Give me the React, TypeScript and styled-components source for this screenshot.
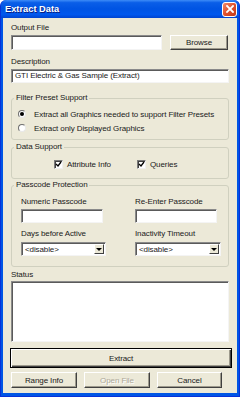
import React, { FC } from 'react'
import styled, { createGlobalStyle } from 'styled-components'

const GlobalStyle = createGlobalStyle`
	html, body {
		margin: 0;
		padding: 0;
		background: #ffffff;
	}
	body {
		font-family: 'Liberation Sans', Arial, sans-serif;
	}
`

const Window = styled.div`
	width: 240px;
	height: 397px;
	box-sizing: border-box;
	display: flex;
	flex-direction: column;
	background: #0055e5;
	border: 1px solid #0831d9;
	border-top: none;
	border-radius: 6px 6px 0 0;
	padding: 0 2px 3px;
`

const TitleBar = styled.div`
	height: 18px;
	margin: 0 -2px;
	display: flex;
	align-items: center;
	justify-content: space-between;
	padding: 0 2px 0 4px;
	border-radius: 6px 6px 0 0;
	background: linear-gradient(
		to bottom,
		#3d8cf7 0%,
		#0a5ee8 15%,
		#0054e3 50%,
		#0058ee 80%,
		#0044d0 100%
	);
`

const Title = styled.span`
	color: #ffffff;
	font-weight: bold;
	font-size: 9.3px;
	text-shadow: 1px 1px 0 #0a1e80;
`

const CloseButton = styled.div`
	width: 15px;
	height: 15px;
	box-sizing: border-box;
	border: 1px solid #ffffff;
	border-radius: 3px;
	background: linear-gradient(135deg, #f08a6a 0%, #e0502c 50%, #c23a1a 100%);
	display: flex;
	align-items: center;
	justify-content: center;
`

const Body = styled.div`
	flex: 1;
	display: flex;
	flex-direction: column;
	background: #ece9d8;
	padding: 0 8px 5px 8px;
	font-size: 8px;
	letter-spacing: -0.1px;
	color: #1a1a1a;
`

const Label = styled.div<{ top: number }>`
	height: 10px;
	line-height: 10px;
	margin-top: ${(p) => p.top}px;
	white-space: nowrap;
`

const Row = styled.div<{ top: number }>`
	display: flex;
	gap: 8px;
	margin-top: ${(p) => p.top}px;
`

const TextBox = styled.div<{ w?: number; h: number; top?: number }>`
	box-sizing: border-box;
	${(p) => (p.w ? `width: ${p.w}px;` : 'align-self: stretch;')}
	height: ${(p) => p.h}px;
	margin-top: ${(p) => p.top ?? 0}px;
	background: #ffffff;
	border: 1px solid;
	border-color: #8a8a8a #f4f4f4 #f4f4f4 #8a8a8a;
	box-shadow: inset 1px 1px 0 #5a5a5a;
	padding: 0 3px;
	line-height: 12px;
	white-space: nowrap;
	overflow: hidden;
`

const Button = styled.div<{ w?: number; h: number; disabled?: boolean }>`
	box-sizing: border-box;
	${(p) => (p.w ? `width: ${p.w}px;` : '')}
	height: ${(p) => p.h}px;
	display: flex;
	align-items: center;
	justify-content: center;
	background: #ece9d8;
	border: 1px solid;
	border-color: #ffffff #404040 #404040 #ffffff;
	box-shadow: inset -1px -1px 0 #9d9a8c;
	color: ${(p) => (p.disabled ? '#aca899' : '#1a1a1a')};
	text-shadow: ${(p) => (p.disabled ? '1px 1px 0 #ffffff' : 'none')};
	white-space: nowrap;
`

const DefaultButton = styled(Button)`
	margin: 6px -3px 0 -1px;
	border: 1px solid #000000;
	box-shadow: inset 1px 1px 0 #ffffff, inset -1px -1px 0 #404040,
		inset -2px -2px 0 #9d9a8c;
`

const Group = styled.fieldset<{ top: number; h: number }>`
	box-sizing: border-box;
	margin: ${(p) => p.top}px 0 0 0;
	height: ${(p) => p.h}px;
	padding: 0;
	border: 1px solid #d0d0bf;
	border-radius: 3px;
	min-width: 0;
`

const Legend = styled.legend`
	padding: 0 2px;
	margin-left: 2px;
	height: 10px;
	line-height: 10px;
	font-size: 8px;
	color: #1a1a1a;
`

const GroupBody = styled.div<{ padTop: number; padLeft: number }>`
	padding: ${(p) => p.padTop}px 0 0 ${(p) => p.padLeft}px;
	display: flex;
	flex-direction: column;
`

const OptionRow = styled.div`
	height: 14px;
	display: flex;
	align-items: center;
	gap: 4px;
	white-space: nowrap;
`

const RadioCircle = styled.span<{ checked?: boolean }>`
	box-sizing: border-box;
	width: 8px;
	height: 8px;
	border-radius: 50%;
	background: #ffffff;
	border: 1px solid;
	border-color: #6e6e6e #e8e8e8 #e8e8e8 #6e6e6e;
	display: flex;
	align-items: center;
	justify-content: center;
	margin-right: 4px;
	&::after {
		content: '';
		width: 4px;
		height: 4px;
		border-radius: 50%;
		background: ${(p) => (p.checked ? '#000000' : 'transparent')};
	}
`

const CheckRow = styled.div`
	height: 12px;
	display: flex;
	align-items: center;
`

const CheckItem = styled.div<{ w: number }>`
	width: ${(p) => p.w}px;
	display: flex;
	align-items: center;
	gap: 4px;
	white-space: nowrap;
`

const CheckBox = styled.span`
	box-sizing: border-box;
	width: 9px;
	height: 9px;
	background: #ffffff;
	border: 1px solid;
	border-color: #7a7a7a #f0f0f0 #f0f0f0 #7a7a7a;
	box-shadow: inset 1px 1px 0 #404040;
	display: flex;
	align-items: center;
	justify-content: center;
`

const PassGrid = styled.div`
	display: grid;
	grid-template-columns: 114px 1fr;
`

const Field = styled.div`
	display: flex;
	flex-direction: column;
`

const Select = styled.div<{ w: number; top: number }>`
	box-sizing: border-box;
	width: ${(p) => p.w}px;
	height: 14px;
	margin-top: ${(p) => p.top}px;
	background: #ffffff;
	border: 1px solid;
	border-color: #8a8a8a #f4f4f4 #f4f4f4 #8a8a8a;
	box-shadow: inset 1px 1px 0 #5a5a5a;
	display: flex;
	align-items: center;
	justify-content: space-between;
	padding: 1px 1px 1px 3px;
	white-space: nowrap;
`

const SelectArrow = styled.span`
	box-sizing: border-box;
	width: 10px;
	height: 10px;
	background: #ece9d8;
	border: 1px solid;
	border-color: #ffffff #404040 #404040 #ffffff;
	display: flex;
	align-items: center;
	justify-content: center;
	&::after {
		content: '';
		border-left: 3px solid transparent;
		border-right: 3px solid transparent;
		border-top: 3px solid #000000;
	}
`

const ButtonRow = styled.div`
	display: flex;
	gap: 7px;
	margin-top: 4px;
`

const Check: FC = () => (
	<svg width="7" height="7" viewBox="0 0 7 7">
		<path d="M1 3 L3 5 L6 1" stroke="#000" strokeWidth="1.3" fill="none" />
	</svg>
)

const SelectBox: FC<{ w: number; top: number }> = ({ w, top }) => (
	<Select w={w} top={top}>
		<span>&lt;disable&gt;</span>
		<SelectArrow />
	</Select>
)

const App: FC = () => {
	return (
		<>
			<GlobalStyle />
			<Window>
				<TitleBar>
					<Title>Extract Data</Title>
					<CloseButton>
						<svg width="8" height="8" viewBox="0 0 8 8">
							<path
								d="M1 1 L7 7 M7 1 L1 7"
								stroke="#ffffff"
								strokeWidth="1.8"
								strokeLinecap="square"
							/>
						</svg>
					</CloseButton>
				</TitleBar>
				<Body>
					<Label top={5}>Output File</Label>
					<Row top={2}>
						<TextBox w={151} h={15} />
						<Button w={58} h={15}>
							Browse
						</Button>
					</Row>
					<Label top={7}>Description</Label>
					<TextBox h={14} top={2}>
						GTI Electric &amp; Gas Sample (Extract)
					</TextBox>

					<Group top={10} h={47}>
						<Legend>Filter Preset Support</Legend>
						<GroupBody padTop={4} padLeft={6}>
							<OptionRow>
								<RadioCircle checked />
								Extract all Graphics needed to support Filter Presets
							</OptionRow>
							<OptionRow>
								<RadioCircle />
								Extract only Displayed Graphics
							</OptionRow>
						</GroupBody>
					</Group>

					<Group top={2} h={37}>
						<Legend>Data Support</Legend>
						<GroupBody padTop={6} padLeft={42}>
							<CheckRow>
								<CheckItem w={83}>
									<CheckBox>
										<Check />
									</CheckBox>
									Attribute Info
								</CheckItem>
								<CheckItem w={60}>
									<CheckBox>
										<Check />
									</CheckBox>
									Queries
								</CheckItem>
							</CheckRow>
						</GroupBody>
					</Group>

					<Group top={1} h={87}>
						<Legend>Passcode Protection</Legend>
						<GroupBody padTop={7} padLeft={9}>
							<PassGrid>
								<Field>
									<Label top={0}>Numeric Passcode</Label>
									<TextBox w={82} h={14} top={2} />
									<Label top={6}>Days before Active</Label>
									<SelectBox w={85} top={3} />
								</Field>
								<Field>
									<Label top={0}>Re-Enter Passcode</Label>
									<TextBox w={82} h={14} top={2} />
									<Label top={6}>Inactivity Timeout</Label>
									<SelectBox w={86} top={3} />
								</Field>
							</PassGrid>
						</GroupBody>
					</Group>

					<Label top={3}>Status</Label>
					<TextBox h={61} top={1} />

					<DefaultButton h={20}>Extract</DefaultButton>
					<ButtonRow>
						<Button w={66} h={16}>
							Range Info
						</Button>
						<Button w={66} h={16} disabled>
							Open File
						</Button>
						<Button w={65} h={16}>
							Cancel
						</Button>
					</ButtonRow>
				</Body>
			</Window>
		</>
	)
}

export default App
